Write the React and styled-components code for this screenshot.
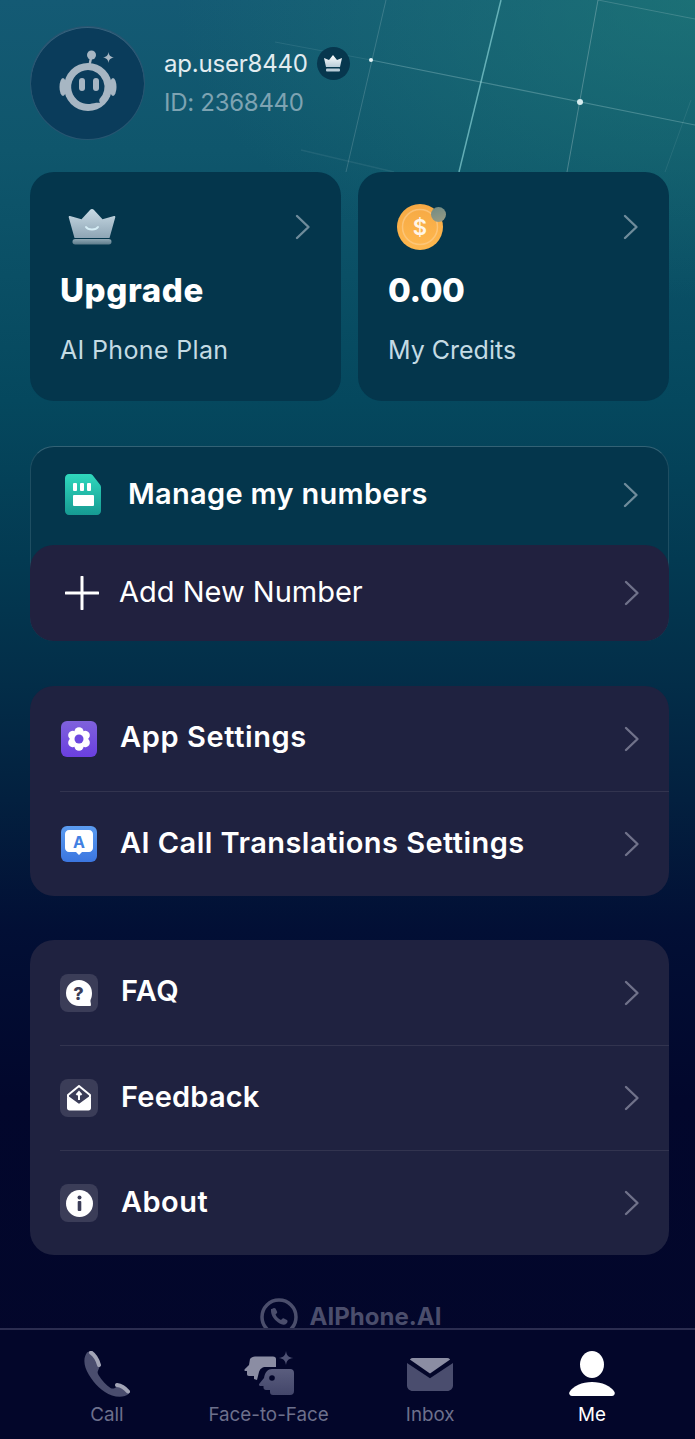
import React from 'react';
import styled, { createGlobalStyle } from 'styled-components';

const GlobalStyle = createGlobalStyle`
  html, body {
    margin: 0;
    padding: 0;
    background: #03062a;
  }
  * {
    box-sizing: border-box;
  }
`;

const Page = styled.div`
  position: relative;
  width: 695px;
  height: 1439px;
  display: flex;
  flex-direction: column;
  overflow: hidden;
  font-family: Inter, "Liberation Sans", sans-serif;
  color: #fff;
  background:
    radial-gradient(520px 300px at 100% 0, rgba(34, 130, 120, 0.55), rgba(34, 130, 120, 0) 100%),
    linear-gradient(180deg, #145a74 0, #0f566c 150px, #05485e 400px, #033a52 560px, #03304a 660px, #03203f 800px, #020f35 930px, #02072c 1100px, #03062a 1439px);
`;

const GridLines = styled.svg`
  position: absolute;
  top: 0;
  left: 0;
  pointer-events: none;
`;

const Content = styled.main`
  position: relative;
  flex: 1;
  min-height: 0;
  overflow: hidden;
  padding: 26px 26px 0 30px;
`;

const Header = styled.header`
  display: flex;
  align-items: center;
  gap: 19px;
  height: 114px;
  margin-bottom: 32px;
`;

const Avatar = styled.div`
  width: 115px;
  height: 114px;
  border-radius: 50%;
  background: #0a3c5b;
  border: 1px solid rgba(190, 220, 230, 0.16);
  box-shadow: inset 0 1px 0 rgba(190, 220, 230, 0.25);
  display: flex;
  align-items: center;
  justify-content: center;
`;

const UserInfo = styled.div`
  display: flex;
  flex-direction: column;
  gap: 8px;
  margin-top: -1px;
`;

const NameRow = styled.div`
  display: flex;
  align-items: center;
  gap: 9px;
  height: 33px;
`;

const UserName = styled.span`
  font-size: 24px;
  letter-spacing: -0.2px;
  color: #e2ecf0;
  line-height: 30px;
`;

const UserId = styled.span`
  font-size: 24px;
  letter-spacing: -0.28px;
  color: #7ea3b2;
  line-height: 30px;
`;

const Badge = styled.span`
  width: 33px;
  height: 33px;
  border-radius: 50%;
  background: #07374e;
  display: flex;
  align-items: center;
  justify-content: center;
`;

const CardGrid = styled.div`
  display: grid;
  grid-template-columns: 311px 311px;
  gap: 17px;
  margin-bottom: 45px;
`;

const Card = styled.section`
  height: 229px;
  padding: 31px 30px 0;
  border-radius: 24px;
  background: #04364c;
`;

const CardTop = styled.div`
  display: flex;
  align-items: center;
  justify-content: space-between;
  height: 48px;
`;

const CardIcon = styled.div`
  position: relative;
  margin-left: ${(p) => p.$indent}px;
  display: flex;
`;

const CoinDot = styled.span`
  position: absolute;
  top: 3px;
  right: -3px;
  width: 15px;
  height: 15px;
  border-radius: 50%;
  background: linear-gradient(160deg, #6f8a84, #9a9c84);
`;

const CardTitle = styled.div`
  margin-top: 19px;
  font-size: 33px;
  line-height: 40px;
  font-weight: 800;
  letter-spacing: ${(p) => p.$spacing}px;
`;

const CardLabel = styled.div`
  margin-top: 25px;
  font-size: 25px;
  letter-spacing: ${(p) => p.$spacing || 0}px;
  line-height: 30px;
  color: #c4dbe4;
`;

const NumbersBox = styled.section`
  height: 195px;
  margin-bottom: 45px;
  border-radius: 24px;
  border: 1px solid rgba(190, 225, 235, 0.14);
  border-top-color: rgba(190, 225, 235, 0.26);
  border-bottom: 0;
  background: #04364c;
  display: flex;
  flex-direction: column;
`;

const ManageRow = styled.div`
  height: 98px;
  padding: 0 29px 2px 34px;
  display: flex;
  align-items: center;
`;

const AddRow = styled.div`
  height: 96px;
  margin: 0 -1px;
  padding: 0 29px 0 35px;
  border-radius: 24px;
  background: #21213f;
  display: flex;
  align-items: center;
`;

const Panel = styled.section`
  border-radius: 24px;
  background: #1f2240;
  margin-bottom: ${(p) => p.$gap}px;
`;

const Row = styled.div`
  height: 105px;
  margin-left: 30px;
  padding-right: 29px;
  display: flex;
  align-items: center;
  gap: 23px;
  & + & {
    border-top: 1px solid #32344f;
  }
`;

const IconSlot = styled.span`
  display: flex;
  flex: none;
  margin-left: ${(p) => p.$indent || 0}px;
`;

const IconTile = styled.span`
  width: 38px;
  height: 38px;
  border-radius: 8px;
  background: #3b3d58;
  display: flex;
  align-items: center;
  justify-content: center;
  flex: none;
`;

const RowText = styled.span`
  flex: 1;
  font-size: 29px;
  line-height: 34px;
  font-weight: ${(p) => p.$weight || 600};
  letter-spacing: ${(p) => (p.$spacing === undefined ? 0.45 : p.$spacing)}px;
  margin-left: ${(p) => p.$indent || 0}px;
  margin-top: -3px;
  color: #fff;
`;

const Brand = styled.div`
  margin-top: -2px;
  padding-left: 2px;
  display: flex;
  align-items: center;
  justify-content: center;
  gap: 12px;
  color: #4b4e6c;
  font-size: 24px;
  line-height: 24px;
  font-weight: 700;
`;

const BottomNav = styled.nav`
  position: relative;
  flex: none;
  height: 111px;
  padding-left: 26px;
  display: grid;
  grid-template-columns: repeat(4, 161.7px);
  background: #03062a;
  border-top: 2px solid #2b2d50;
`;

const NavItem = styled.div`
  display: flex;
  flex-direction: column;
  align-items: center;
  padding-top: 20px;
  color: ${(p) => (p.$active ? '#ffffff' : '#6d708c')};
  font-size: 18.8px;
  line-height: 24px;
`;

const NavIcon = styled.span`
  height: 48px;
  margin-bottom: 5px;
  display: flex;
  align-items: center;
`;

const Chevron = ({ color = '#6f8c9b' }) => (
  <svg width="16" height="26" viewBox="0 0 16 26" fill="none" style={{ flex: 'none' }}>
    <path d="M2 2l11.5 11L2 24" stroke={color} strokeWidth="2.4" strokeLinecap="round" strokeLinejoin="round" />
  </svg>
);

const RobotIcon = () => (
  <svg width="62" height="66" viewBox="0 0 62 66" style={{ marginTop: -2 }}>
    <circle cx="34.500" cy="6" r="4.500" fill="#a7b6c3" />
    <path d="M34 9l-1.500 7" stroke="#a7b6c3" strokeWidth="2.400" />
    <path d="M51.500 3c.6 3.600 1.600 4.600 5.500 5.500-3.900.9-4.900 1.900-5.500 5.500-.6-3.600-1.600-4.600-5.500-5.500 3.900-.9 4.900-1.900 5.500-5.500z" fill="#a7b6c3" />
    <ellipse cx="6" cy="38" rx="3.500" ry="9" fill="#a7b6c3" />
    <ellipse cx="56" cy="38" rx="3.500" ry="9" fill="#a7b6c3" />
    <circle cx="31" cy="38" r="24" fill="#a7b6c3" />
    <path d="M31 21a17 17 0 1 0 2 33.900c3-.4 7-1.400 10-.9-.8-1.500-1-2.500-.5-4A17 17 0 0 0 31 21z" fill="#0a3c5b" />
    <rect x="22" y="29" width="6" height="13" rx="3" fill="#a7b6c3" />
    <rect x="36" y="29" width="6" height="13" rx="3" fill="#a7b6c3" />
  </svg>
);

const CrownBadgeIcon = () => (
  <svg width="20" height="17" viewBox="0 0 20 17">
    <defs>
      <linearGradient id="badgeCrown" x1="0" y1="0" x2="0" y2="1">
        <stop offset="0" stopColor="#ffffff" />
        <stop offset="1" stopColor="#b9ccd8" />
      </linearGradient>
    </defs>
    <path d="M10 0l4 5 5-2-2 9H3L1 3l5 2z" fill="url(#badgeCrown)" />
    <rect x="3" y="13.500" width="14" height="3" rx="1" fill="#b9ccd8" />
  </svg>
);

const CrownIcon = () => (
  <svg width="48" height="36" viewBox="0 0 48 36">
    <defs>
      <linearGradient id="crownBody" x1="0" y1="0" x2="0" y2="1">
        <stop offset="0" stopColor="#c9dbe5" />
        <stop offset="1" stopColor="#8ea5b5" />
      </linearGradient>
      <linearGradient id="crownBase" x1="0" y1="0" x2="0" y2="1">
        <stop offset="0" stopColor="#8fa7b4" />
        <stop offset="1" stopColor="#5e7c8b" />
      </linearGradient>
    </defs>
    <path d="M24 0c.8 0 1.400.4 2 1l8.500 9.200L46 7c1-.2 1.500.4 1.300 1.300L41.500 29H6.500L.7 8.300C.5 7.400 1 6.800 2 7l11.500 3.200L22 1c.6-.6 1.200-1 2-1z" fill="url(#crownBody)" />
    <path d="M18 18c2 3.200 10 3.200 12 0" stroke="#d6eef6" strokeWidth="2" fill="none" strokeLinecap="round" />
    <rect x="4.500" y="30" width="39" height="5.500" rx="2.700" fill="url(#crownBase)" />
  </svg>
);

const CoinIcon = () => (
  <svg width="46" height="46" viewBox="0 0 46 46">
    <defs>
      <linearGradient id="coinFill" x1="0" y1="0" x2="0" y2="1">
        <stop offset="0" stopColor="#f6a944" />
        <stop offset="1" stopColor="#ffb84f" />
      </linearGradient>
    </defs>
    <circle cx="23" cy="23" r="23" fill="url(#coinFill)" />
    <circle cx="23" cy="23" r="17.500" fill="none" stroke="#fdd092" strokeOpacity="0.6" strokeWidth="1.500" />
    <text x="23" y="30.500" textAnchor="middle" fontFamily="Inter, sans-serif" fontWeight="600" fontSize="22" fill="#fff6e8">$</text>
  </svg>
);

const SimIcon = () => (
  <svg width="36" height="41" viewBox="0 0 36 41" style={{ marginTop: -2 }}>
    <defs>
      <linearGradient id="simFill" x1="0" y1="0" x2="0" y2="1">
        <stop offset="0" stopColor="#2fd8bd" />
        <stop offset="1" stopColor="#169a92" />
      </linearGradient>
    </defs>
    <path d="M4 0h21c1 0 1.800.4 2.500 1.100l7.400 9.400c.7.800 1.100 1.700 1.100 2.700V37c0 2.200-1.800 4-4 4H4c-2.200 0-4-1.800-4-4V4c0-2.200 1.800-4 4-4z" fill="url(#simFill)" />
    <rect x="8" y="9" width="4" height="8" rx="1" fill="#fff" />
    <rect x="15" y="9" width="4" height="8" rx="1" fill="#fff" />
    <rect x="22" y="9" width="4" height="8" rx="1" fill="#fff" />
    <rect x="8" y="21" width="21" height="11" rx="1" fill="#fff" />
  </svg>
);

const PlusIcon = () => (
  <svg width="34" height="34" viewBox="0 0 34 34">
    <path d="M17 1v32M1 17h32" stroke="#fff" strokeWidth="3" strokeLinecap="round" />
  </svg>
);

const GEAR_LOBES = [0, 60, 120, 180, 240, 300];

const GearTile = () => (
  <svg width="36" height="36" viewBox="0 0 36 36">
    <defs>
      <linearGradient id="gearBg" x1="0" y1="0" x2="0" y2="1">
        <stop offset="0" stopColor="#7f62dc" />
        <stop offset="1" stopColor="#6a3fe0" />
      </linearGradient>
    </defs>
    <rect width="36" height="36" rx="6" fill="url(#gearBg)" />
    {GEAR_LOBES.map((deg) => (
      <circle key={deg} cx="18" cy="10.800" r="4.600" fill="#fff" transform={`rotate(${deg} 18 18)`} />
    ))}
    <circle cx="18" cy="18" r="8.500" fill="#fff" />
    <circle cx="18" cy="18" r="4.500" fill="#6d48e0" />
  </svg>
);

const TranslateTile = () => (
  <svg width="36" height="36" viewBox="0 0 36 36">
    <defs>
      <linearGradient id="transBg" x1="0" y1="0" x2="0" y2="1">
        <stop offset="0" stopColor="#5b9cf0" />
        <stop offset="1" stopColor="#3b76e0" />
      </linearGradient>
    </defs>
    <rect width="36" height="36" rx="6" fill="url(#transBg)" />
    <path d="M8 4h20c2.200 0 4 1.800 4 4v14c0 2.200-1.800 4-4 4h-7l-3 3-3-3H8c-2.200 0-4-1.800-4-4V8c0-2.200 1.800-4 4-4z" fill="#fff" />
    <text x="18" y="22" textAnchor="middle" fontFamily="Inter, sans-serif" fontWeight="700" fontSize="16" fill="#4180e2">A</text>
  </svg>
);

const QuestionIcon = () => (
  <svg width="28" height="28" viewBox="0 0 28 28">
    <path d="M14 1a13 13 0 0 1 13 13c0 3-.6 5-1.500 7-.3 1.500.5 3 .5 5 0 1-1 1-2 1H14A13 13 0 0 1 14 1z" fill="#fff" />
    <text x="13.500" y="20.500" textAnchor="middle" fontFamily="Inter, sans-serif" fontWeight="800" fontSize="18" fill="#3b3d58">?</text>
  </svg>
);

const MailUpIcon = () => (
  <svg width="26" height="26" viewBox="0 0 26 26">
    <path d="M13 1l11 9v2L13 20 2 12v-2z" fill="none" stroke="#fff" strokeWidth="2" strokeLinejoin="round" />
    <path d="M1 12l12 8 12-8v11c0 1.500-1 2.500-2.500 2.500h-19C2 25.500 1 24.500 1 23z" fill="#fff" />
    <path d="M13 15V8M10.500 10L13 7l2.500 3" stroke="#fff" strokeWidth="2" fill="none" />
  </svg>
);

const InfoIcon = () => (
  <svg width="27" height="27" viewBox="0 0 27 27">
    <circle cx="13.500" cy="13.500" r="13.500" fill="#fff" />
    <circle cx="13.500" cy="7.500" r="2" fill="#3b3d58" />
    <rect x="11.700" y="11" width="3.600" height="10" rx="1" fill="#3b3d58" />
  </svg>
);

const BrandMark = () => (
  <svg width="38" height="38" viewBox="0 0 38 38" fill="none">
    <circle cx="19" cy="19" r="17" stroke="#4b4e6c" strokeWidth="3.500" />
    <path d="M12 11c1-1 2.500-1.500 3.500-.5l1.500 3c.4.800.2 1.500-.5 2l-1 1c1 2.500 3 4.500 5.500 5.500l1-1c.5-.7 1.200-.9 2-.5l3 1.500c1 1 .5 2.500-.5 3.500-2 2-5 1.500-9-1.500-4-3-7-7.500-6.500-13z" fill="#4b4e6c" />
  </svg>
);

const PhoneNavIcon = () => (
  <svg width="46" height="47" viewBox="0 0 46 47">
    <path d="M3 1.500C-1 7 -.5 15 5 24c5.500 9 13 17 23 20.500 6 2 13 2 17-2-1-3-6-7-11-8l-3 2.500c-1.500.8-3 .8-4.500 0-4.500-3-8.500-7.500-12-13-1-1.800-1.200-3-.4-4.500L15.500 16C15 10 11 4 7.500 1c-1.500-.8-3-.5-4.500.5z" fill="#4a4d6e" />
    <path d="M7 1.500c3 2 6.500 7 8 12.500" stroke="#a2a4b6" strokeWidth="4" strokeLinecap="round" fill="none" />
    <path d="M33 34c4 .5 8 3 11 6.500" stroke="#a2a4b6" strokeWidth="4" strokeLinecap="round" fill="none" />
  </svg>
);

const FaceNavIcon = () => (
  <svg width="50" height="46" viewBox="0 0 50 46">
    <defs>
      <linearGradient id="faceFront" x1="0" y1="0" x2="0" y2="1">
        <stop offset="0" stopColor="#5a5d7e" />
        <stop offset="1" stopColor="#43466a" />
      </linearGradient>
    </defs>
    <path d="M6 8c1-1.500 3-2.500 5-2.500h18c2 0 3 1 3 2.500v8H22c-4 0-6 2-7 5l-2 8-3-1v-3H5c-1.500 0-2-1-2-2v-3H1.500C.5 20 0 19 .7 18.200L5 14z" fill="#8b8da3" />
    <path d="M28 18h18a4 4 0 0 1 4 4v18a4 4 0 0 1-4 4H29c-2 0-3-1-3-3v-2h-4c-1.500 0-2.500-1-2.500-2.500V35h-3c-1.500 0-2-1.500-1-2.500L20 27c1-6 4-9 8-9z" fill="url(#faceFront)" />
    <circle cx="28" cy="27" r="2.800" fill="#03062a" />
    <path d="M42 0c.7 4.600 2.400 6.300 7.500 7-5.100.7-6.800 2.400-7.500 7-.7-4.600-2.400-6.300-7.500-7 5.100-.7 6.800-2.400 7.500-7z" fill="#4f5274" />
  </svg>
);

const MailNavIcon = () => (
  <svg width="46" height="33" viewBox="0 0 48 36" preserveAspectRatio="none">
    <path d="M0 5.500V30c0 3.300 2.700 6 6 6h36c3.300 0 6-2.700 6-6V5.500L24 22z" fill="#4a4d6e" />
    <path d="M3 1.500C4 .5 5 0 6 0h36c1 0 2 .5 3 1.500L24 17z" fill="#8b8da3" />
  </svg>
);

const PersonNavIcon = () => (
  <svg width="46" height="46" viewBox="0 0 46 46">
    <ellipse cx="23" cy="13.500" rx="12" ry="13.500" fill="#fff" />
    <path d="M23 31c10 0 19 4 22.500 10 .8 2-.5 4-2.500 4H3c-2 0-3.300-2-2.500-4C4 35 13 31 23 31z" fill="#fff" />
  </svg>
);

const App = () => {
  return (
    <>
      <GlobalStyle />
      <Page>
        <GridLines width="695" height="172" viewBox="0 0 695 172" fill="none">
          <path d="M386 0L346 172" stroke="#fff" strokeOpacity="0.16" />
          <path d="M501 0L459 172" stroke="#9ae3e6" strokeOpacity="0.6" strokeWidth="1.500" />
          <path d="M598 0L567 172" stroke="#fff" strokeOpacity="0.24" />
          <path d="M691 100L665 172" stroke="#fff" strokeOpacity="0.08" />
          <path d="M275 42L371 60" stroke="#cfeef0" strokeOpacity="0.1" strokeWidth="1.200" />
          <path d="M371 60L695 125" stroke="#cfeef0" strokeOpacity="0.26" strokeWidth="1.200" />
          <path d="M598 0L695 19" stroke="#fff" strokeOpacity="0.16" />
          <path d="M301 150L394 172" stroke="#fff" strokeOpacity="0.07" strokeWidth="1.500" />
          <circle cx="371" cy="60" r="2" fill="#e6f5f6" />
          <circle cx="580" cy="102" r="3" fill="#d5ecee" />
        </GridLines>

        <Content>
          <Header>
            <Avatar>
              <RobotIcon />
            </Avatar>
            <UserInfo>
              <NameRow>
                <UserName>ap.user8440</UserName>
                <Badge>
                  <CrownBadgeIcon />
                </Badge>
              </NameRow>
              <UserId>ID: 2368440</UserId>
            </UserInfo>
          </Header>

          <CardGrid>
            <Card>
              <CardTop>
                <CardIcon $indent={8}>
                  <CrownIcon />
                </CardIcon>
                <Chevron />
              </CardTop>
              <CardTitle $spacing={0.6}>Upgrade</CardTitle>
              <CardLabel $spacing={0.35}>AI Phone Plan</CardLabel>
            </Card>
            <Card>
              <CardTop>
                <CardIcon $indent={9}>
                  <CoinIcon />
                  <CoinDot />
                </CardIcon>
                <Chevron />
              </CardTop>
              <CardTitle $spacing={-0.4}>0.00</CardTitle>
              <CardLabel>My Credits</CardLabel>
            </Card>
          </CardGrid>

          <NumbersBox>
            <ManageRow>
              <IconSlot>
                <SimIcon />
              </IconSlot>
              <RowText $indent={27} $spacing={0.3}>Manage my numbers</RowText>
              <Chevron />
            </ManageRow>
            <AddRow>
              <IconSlot>
                <PlusIcon />
              </IconSlot>
              <RowText $weight={400} $indent={20} $spacing={0}>Add New Number</RowText>
              <Chevron color="#70728a" />
            </AddRow>
          </NumbersBox>

          <Panel $gap={44}>
            <Row>
              <IconSlot $indent={1}>
                <GearTile />
              </IconSlot>
              <RowText $spacing={0.6}>App Settings</RowText>
              <Chevron color="#70728a" />
            </Row>
            <Row>
              <IconSlot $indent={1}>
                <TranslateTile />
              </IconSlot>
              <RowText>AI Call Translations Settings</RowText>
              <Chevron color="#70728a" />
            </Row>
          </Panel>

          <Panel $gap={45}>
            <Row>
              <IconTile>
                <QuestionIcon />
              </IconTile>
              <RowText>FAQ</RowText>
              <Chevron color="#70728a" />
            </Row>
            <Row>
              <IconTile>
                <MailUpIcon />
              </IconTile>
              <RowText $spacing={0.2}>Feedback</RowText>
              <Chevron color="#70728a" />
            </Row>
            <Row>
              <IconTile>
                <InfoIcon />
              </IconTile>
              <RowText>About</RowText>
              <Chevron color="#70728a" />
            </Row>
          </Panel>

          <Brand>
            <BrandMark />
            AIPhone.AI
          </Brand>
        </Content>

        <BottomNav>
          <NavItem>
            <NavIcon>
              <PhoneNavIcon />
            </NavIcon>
            Call
          </NavItem>
          <NavItem>
            <NavIcon>
              <FaceNavIcon />
            </NavIcon>
            Face-to-Face
          </NavItem>
          <NavItem>
            <NavIcon>
              <MailNavIcon />
            </NavIcon>
            Inbox
          </NavItem>
          <NavItem $active>
            <NavIcon>
              <PersonNavIcon />
            </NavIcon>
            Me
          </NavItem>
        </BottomNav>
      </Page>
    </>
  );
};

export default App;
